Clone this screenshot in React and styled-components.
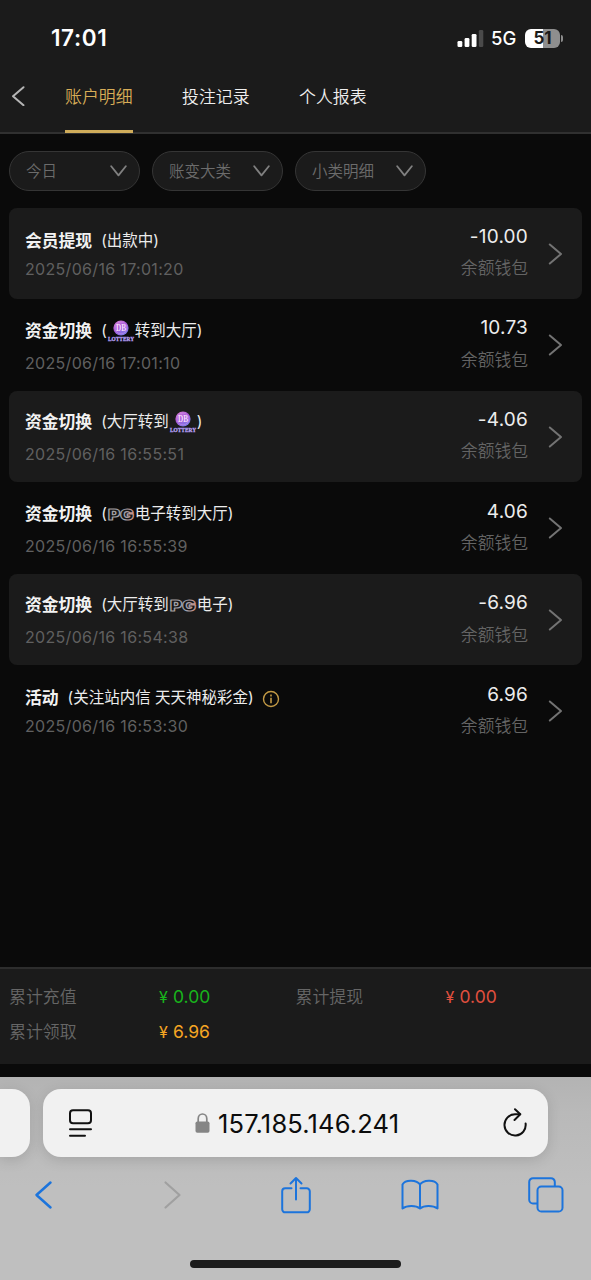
import React from "react";
import styled, { createGlobalStyle } from "styled-components";

const GlobalStyle = createGlobalStyle`
  * { box-sizing: border-box; }
  body {
    margin: 0;
    background: #0a0a0a;
    font-family: Inter, "Noto Sans CJK SC", sans-serif;
  }
  svg { display: block; flex: none; }
`;

const Screen = styled.div`
  width: 591px;
  height: 1280px;
  display: flex;
  flex-direction: column;
  overflow: hidden;
  background: #0a0a0a;
  color: #f2f2f2;
`;

const Header = styled.header`
  height: 134px;
  background: #1b1b1b;
  border-bottom: 2px solid #303030;
`;

const StatusBar = styled.div`
  padding: 12px 28px 0 51px;
  display: flex;
  align-items: center;
  justify-content: space-between;
  height: 64px;
`;

const Clock = styled.span`
  font-size: 22.5px;
  line-height: 26px;
  font-weight: 600;
  color: #fff;
  letter-spacing: 0.6px;
`;

const StatusIcons = styled.div`
  display: flex;
  align-items: center;
`;

const Network = styled.span`
  width: 41px;
  padding-left: 7px;
  font-size: 18.5px;
  line-height: 22px;
  font-weight: 500;
  letter-spacing: 0;
  color: #fff;
`;

const Battery = styled.div`
  display: flex;
  align-items: center;
  gap: 1px;
  &::after {
    content: "";
    width: 2px;
    height: 7px;
    border-radius: 0 2px 2px 0;
    background: #8c8c8c;
  }
`;

const BatteryLevel = styled.span`
  width: 35px;
  height: 19px;
  border-radius: 6px;
  background: linear-gradient(90deg, #fff 51%, #8e8e8e 51%);
  color: #1b1b1b;
  font-size: 17px;
  line-height: 19px;
  font-weight: 700;
  text-align: center;
`;

const Nav = styled.nav`
  height: 69px;
  padding-left: 11px;
  display: flex;
  align-items: stretch;
`;

const BackButton = styled.div`
  width: 54px;
  padding-top: 22px;
`;

const Tab = styled.div`
  width: 68px;
  margin-right: 49px;
  padding-top: 21px;
  font-size: 16.9px;
  line-height: 25px;
  font-weight: 350;
  white-space: nowrap;
  color: ${(p) => (p.$active ? "#d8ad57" : "#efefef")};
  border-bottom: 3px solid ${(p) => (p.$active ? "#cfac5a" : "transparent")};
`;

const Filters = styled.div`
  padding: 17px 9px 0;
  display: flex;
  gap: 12px;
`;

const Filter = styled.div`
  width: 131px;
  height: 40px;
  padding: 0 12px 0 16px;
  display: flex;
  align-items: center;
  justify-content: space-between;
  border: 1.5px solid #353535;
  border-radius: 20px;
  background: #1b1b1b;
  color: #6c6c6c;
  font-size: 15.5px;
  font-weight: 350;
  line-height: 22px;
`;

const FilterName = styled.span`
  padding-top: 2px;
`;

const List = styled.main`
  flex: 1;
  padding: 16.5px 9px 0;
`;

const Row = styled.article`
  height: 91.6px;
  padding: 0 19px 0 16px;
  display: flex;
  border-radius: 8px;
  background: ${(p) => (p.$filled ? "#1b1b1b" : "transparent")};
`;

const RowInfo = styled.div`
  flex: 1;
  padding-top: ${(p) => (p.$logo ? "18.5px" : "20px")};
`;

const RowTitle = styled.div`
  height: 26px;
  display: flex;
  align-items: center;
  white-space: nowrap;
`;

const Kind = styled.b`
  font-size: 16.8px;
  line-height: 26px;
  font-weight: 700;
  margin-right: 9px;
`;

const Detail = styled.span`
  display: flex;
  align-items: center;
  font-size: 15.5px;
  line-height: 26px;
  color: #ececec;
`;

const Stamp = styled.div`
  margin-top: ${(p) => (p.$logo ? "9px" : "5px")};
  font-size: 16px;
  line-height: 20px;
  letter-spacing: 0.32px;
  color: #606060;
`;

const RowValue = styled.div`
  width: 90px;
  padding-top: 17.3px;
  text-align: right;
`;

const Amount = styled.div`
  font-size: 19px;
  line-height: 24px;
  letter-spacing: 0.2px;
  color: #ededed;
`;

const Wallet = styled.div`
  margin-top: 7.5px;
  font-size: 16.8px;
  font-weight: 350;
  line-height: 25px;
  color: #646464;
`;

const RowArrow = styled.div`
  padding: 35px 0 0 20px;
`;

const InfoIcon = styled.svg`
  margin: 2px 0 0 8px;
`;

const Totals = styled.section`
  height: 97px;
  padding: 12px 9px 0;
  display: grid;
  grid-template-columns: 150px 136.5px 150px 1fr;
  grid-auto-rows: 35px;
  align-content: start;
  border-top: 2px solid #2d2d2d;
  background: #1b1b1b;
`;

const TotalLabel = styled.span`
  font-size: 16.9px;
  font-weight: 350;
  line-height: 32px;
  color: #666;
`;

const TotalValue = styled.span`
  font-size: 17.5px;
  line-height: 32px;
  color: ${(p) => p.$tone};
`;

const Yen = styled.span`
  display: inline-block;
  width: 14px;
  font-size: 16px;
`;

const Browser = styled.footer`
  height: 203px;
  margin-top: 13px;
  padding-top: 12px;
  background: linear-gradient(180deg, #b3b3b3 0, #b9b9b9 35px, #bfbfbf 110px, #bfbfbf 100%);
`;

const AddressRow = styled.div`
  display: flex;
  gap: 13px;
`;

const PreviousPage = styled.div`
  width: 30px;
  height: 68px;
  border-radius: 0 18px 18px 0;
  background: #f1f1f1;
  box-shadow: 0 3px 14px rgba(0, 0, 0, 0.13);
`;

const AddressBar = styled.div`
  width: 505px;
  height: 68px;
  padding: 0 20px 0 25px;
  display: flex;
  align-items: center;
  justify-content: space-between;
  border-radius: 18px;
  background: #f1f1f1;
  box-shadow: 0 3px 14px rgba(0, 0, 0, 0.13);
`;

const Address = styled.div`
  display: flex;
  align-items: center;
  gap: 8px;
  color: #0c0c0c;
  font-size: 25.5px;
  line-height: 32px;
`;

const Host = styled.span`
  width: 182px;
  padding-top: 1px;
  letter-spacing: 0.15px;
  white-space: nowrap;
`;

const Toolbar = styled.div`
  height: 76px;
  padding: 0 26px 0 24px;
  display: flex;
  align-items: center;
  justify-content: space-between;
`;

const Tool = styled.div`
  width: 38px;
  display: flex;
  justify-content: center;
  padding-left: ${(p) => p.$shift || 0}px;
`;

const HomeIndicator = styled.div`
  width: 211px;
  height: 8px;
  margin: 27px auto 0;
  border-radius: 4px;
  background: #1c1c1c;
`;

const Chevron = ({ w, h, d, color, sw }) => (
  <svg width={w} height={h} viewBox={`0 0 ${w} ${h}`} fill="none" stroke={color} strokeWidth={sw} strokeLinecap="round" strokeLinejoin="round">
    <path d={d} />
  </svg>
);

const LotteryLogo = () => (
  <svg width="28" height="32" viewBox="0 -3 28 32">
    <defs>
      <linearGradient id="coin" x1="0" y1="0" x2="0.6" y2="1">
        <stop offset="0" stopColor="#e58ad8" />
        <stop offset="0.5" stopColor="#a858d6" />
        <stop offset="1" stopColor="#7d7bea" />
      </linearGradient>
    </defs>
    <circle cx="14" cy="10" r="7.6" fill="url(#coin)" />
    <circle cx="14" cy="10" r="5.9" fill="none" stroke="#c78bea" strokeWidth="0.6" />
    <text x="14" y="13.3" textAnchor="middle" fontFamily="Liberation Serif, serif" fontWeight="700" fontSize="9.5" textLength="10" lengthAdjust="spacingAndGlyphs" fill="#f8dcfa">DB</text>
    <text x="1" y="22.6" fontFamily="Liberation Serif, serif" fontWeight="700" fontSize="6.8" textLength="26" lengthAdjust="spacingAndGlyphs" fill="#cfc0ff" stroke="#a58cf0" strokeWidth="0.3">LOTTERY</text>
  </svg>
);

const PgLogo = () => (
  <svg width="28" height="20" viewBox="0 -2 28 20">
    <defs>
      <linearGradient id="pgEdge" x1="0" y1="0" x2="1" y2="0">
        <stop offset="0" stopColor="#a8a2a0" />
        <stop offset="0.6" stopColor="#9aa3b0" />
        <stop offset="1" stopColor="#c98f84" />
      </linearGradient>
    </defs>
    <text x="1" y="13.6" fontFamily="Inter, sans-serif" fontWeight="900" fontSize="15" textLength="26" lengthAdjust="spacingAndGlyphs" fill="#161616" stroke="url(#pgEdge)" strokeWidth="1.1" strokeLinejoin="round">PG</text>
  </svg>
);

const rows = [
  { kind: "会员提现", detail: "(出款中)", time: "2025/06/16 17:01:20", amount: "-10.00" },
  { kind: "资金切换", logo: true, detail: <>(<LotteryLogo />转到大厅)</>, time: "2025/06/16 17:01:10", amount: "10.73" },
  { kind: "资金切换", logo: true, detail: <>(大厅转到<LotteryLogo />)</>, time: "2025/06/16 16:55:51", amount: "-4.06" },
  { kind: "资金切换", logo: true, detail: <>(<PgLogo />电子转到大厅)</>, time: "2025/06/16 16:55:39", amount: "4.06" },
  { kind: "资金切换", logo: true, detail: <>(大厅转到<PgLogo />电子)</>, time: "2025/06/16 16:54:38", amount: "-6.96" },
  { kind: "活动", info: true, detail: "(关注站内信 天天神秘彩金)", time: "2025/06/16 16:53:30", amount: "6.96" },
];

const totals = [
  { label: "累计充值", value: "0.00", tone: "#18b51c" },
  { label: "累计提现", value: "0.00", tone: "#e2503f" },
  { label: "累计领取", value: "6.96", tone: "#f5a623" },
];

const Signal = () => (
  <svg width="27" height="18" viewBox="0 0 27 18" fill="#fff">
    <rect x="0.5" y="12" width="4.8" height="6" rx="1.3" />
    <rect x="7.6" y="9" width="4.8" height="9" rx="1.3" />
    <rect x="14.7" y="5" width="4.8" height="13" rx="1.3" />
    <rect x="21.8" y="1" width="4.5" height="17" rx="1.3" fill="#4a4a4a" />
  </svg>
);

export default function App() {
  return (
    <Screen>
      <GlobalStyle />
      <Header>
        <StatusBar>
          <Clock>17:01</Clock>
          <StatusIcons>
            <Signal />
            <Network>5G</Network>
            <Battery><BatteryLevel>51</BatteryLevel></Battery>
          </StatusIcons>
        </StatusBar>
        <Nav>
          <BackButton>
            <Chevron w={14} h={20} d="M12.5 1.2 2 10.2l10.5 9" color="#b5b5b5" sw={2} />
          </BackButton>
          <Tab $active>账户明细</Tab>
          <Tab>投注记录</Tab>
          <Tab>个人报表</Tab>
        </Nav>
      </Header>
      <Filters>
        {["今日", "账变大类", "小类明细"].map((name) => (
          <Filter key={name}>
            <FilterName>{name}</FilterName>
            <Chevron w={17} h={12} d="M1.2 1.2 8.5 10.4l7.3-9.2" color="#808080" sw={1.8} />
          </Filter>
        ))}
      </Filters>
      <List>
        {rows.map((r, i) => (
          <Row key={r.time} $filled={i % 2 === 0}>
            <RowInfo $logo={r.logo}>
              <RowTitle>
                <Kind>{r.kind}</Kind>
                <Detail>{r.detail}</Detail>
                {r.info && (
                  <InfoIcon width="18" height="18" viewBox="0 0 18 18" fill="none" stroke="#c39a45" strokeWidth="1.4">
                    <circle cx="9" cy="9" r="7.5" />
                    <path d="M9 7.8v5.4M9 4.6v1.8" strokeWidth="1.6" />
                  </InfoIcon>
                )}
              </RowTitle>
              <Stamp $logo={r.logo}>{r.time}</Stamp>
            </RowInfo>
            <RowValue>
              <Amount>{r.amount}</Amount>
              <Wallet>余额钱包</Wallet>
            </RowValue>
            <RowArrow>
              <Chevron w={15} h={22} d="M1.8 1.5 13 11 1.8 20.5" color="#737373" sw={2} />
            </RowArrow>
          </Row>
        ))}
      </List>
      <Totals>
        {totals.map((t) => (
          <React.Fragment key={t.label}>
            <TotalLabel>{t.label}</TotalLabel>
            <TotalValue $tone={t.tone}><Yen>¥</Yen>{t.value}</TotalValue>
          </React.Fragment>
        ))}
      </Totals>
      <Browser>
        <AddressRow>
          <PreviousPage />
          <AddressBar>
            <svg width="25" height="28" viewBox="0 0 25 28" fill="none" stroke="#111" strokeWidth="2" strokeLinecap="round">
              <rect x="2" y="1.3" width="21" height="13" rx="3" />
              <path d="M2 20.2h21M2 26.7h15" />
            </svg>
            <Address>
              <svg width="15" height="20" viewBox="0 0 15 20">
                <path d="M3.2 9V5.8a4.3 4.8 0 0 1 8.6 0V9" fill="none" stroke="#858585" strokeWidth="1.7" />
                <rect x="0.5" y="8.5" width="14" height="11.3" rx="1.8" fill="#858585" />
              </svg>
              <Host>157.185.146.241</Host>
            </Address>
            <svg width="26" height="30" viewBox="0 0 26 30" fill="none" stroke="#111" strokeWidth="2" strokeLinecap="round" strokeLinejoin="round">
              <path d="M18 6.3H13A10.6 10.6 0 1 0 23.6 15.5" />
              <path d="M13 1.3 18.3 6.3 12.5 12" />
            </svg>
          </AddressBar>
        </AddressRow>
        <Toolbar>
          <Tool>
            <Chevron w={19} h={30} d="M16.5 2.5 2.5 15l14 12.5" color="#1c74dc" sw={2.5} />
          </Tool>
          <Tool $shift={7}>
            <Chevron w={19} h={30} d="M2.5 2.5 16.5 15l-14 12.5" color="#a0a0a0" sw={2.2} />
          </Tool>
          <Tool $shift={3}>
            <svg width="30" height="38" viewBox="0 0 30 38" fill="none" stroke="#1c74dc" strokeWidth="2" strokeLinecap="round" strokeLinejoin="round">
              <path d="M10.5 12.3H4.2A3 3 0 0 0 1.2 15.3v18A3 3 0 0 0 4.2 36.3h21.6a3 3 0 0 0 3-3v-18a3 3 0 0 0-3-3h-6.3" />
              <path d="M15 23.5V2M9.5 7.5 15 2l5.5 5.5" />
            </svg>
          </Tool>
          <Tool>
            <svg width="38" height="32" viewBox="0 0 38 32" fill="none" stroke="#1c74dc" strokeWidth="2" strokeLinejoin="round">
              <path d="M19 5.5C16 1 4.5 0 1.5 5.5V29.5C6 26 15 26 19 29.5 23 26 32 26 36.5 29.5V5.5C33.5 0 22 1 19 5.5V29.5" />
            </svg>
          </Tool>
          <Tool>
            <svg width="36" height="36" viewBox="0 0 36 36" fill="none" stroke="#1c74dc" strokeWidth="2">
              <path d="M9.5 26.5H5a3.8 3.8 0 0 1-3.8-3.8V5A3.8 3.8 0 0 1 5 1.2h18A3.8 3.8 0 0 1 26.8 5v4.2" />
              <rect x="9.5" y="9.5" width="25" height="25" rx="3.8" />
            </svg>
          </Tool>
        </Toolbar>
        <HomeIndicator />
      </Browser>
    </Screen>
  );
}
